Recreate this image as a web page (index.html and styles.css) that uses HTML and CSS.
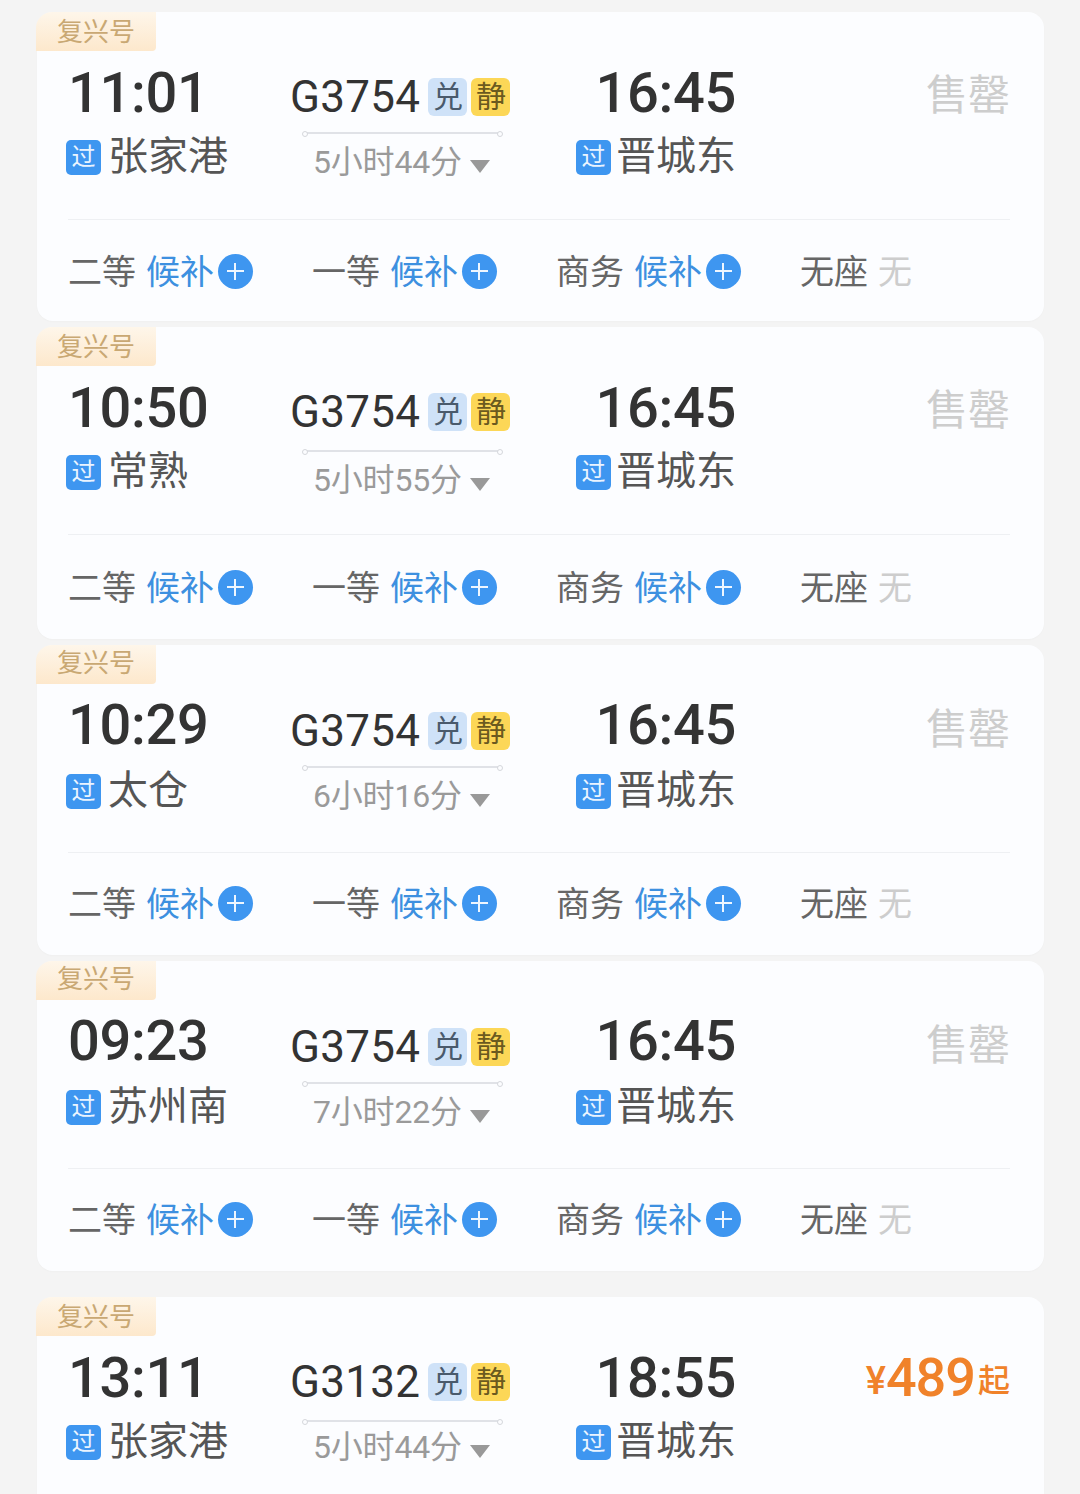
FILE: index.html
```html
<!DOCTYPE html>
<html lang="zh-CN">
<head>
<meta charset="utf-8">
<title>车次列表</title>
<link rel="stylesheet" href="styles.css">
</head>
<body>
<main class="list">

<article class="card">
  <div class="tag">复兴号</div>
  <div class="main">
    <div class="dep"><div class="time">11:01</div><div class="station"><span class="pass">过</span>张家港</div></div>
    <div class="train">
      <div class="no"><span>G3754</span><span class="chip chip-blue">兑</span><span class="chip chip-yellow">静</span></div>
      <div class="bar"></div>
      <div class="dur">5小时44分<i class="tri"></i></div>
    </div>
    <div class="arr"><div class="time">16:45</div><div class="station"><span class="pass">过</span>晋城东</div></div>
    <div class="status">售罄</div>
  </div>
  <div class="seats">
    <div class="seat">二等<span class="wait">候补</span><i class="plus"></i></div>
    <div class="seat">一等<span class="wait">候补</span><i class="plus"></i></div>
    <div class="seat">商务<span class="wait">候补</span><i class="plus"></i></div>
    <div class="seat">无座<span class="none">无</span></div>
  </div>
</article>

<article class="card card-b">
  <div class="tag">复兴号</div>
  <div class="main">
    <div class="dep"><div class="time">10:50</div><div class="station"><span class="pass">过</span>常熟</div></div>
    <div class="train">
      <div class="no"><span>G3754</span><span class="chip chip-blue">兑</span><span class="chip chip-yellow">静</span></div>
      <div class="bar"></div>
      <div class="dur">5小时55分<i class="tri"></i></div>
    </div>
    <div class="arr"><div class="time">16:45</div><div class="station"><span class="pass">过</span>晋城东</div></div>
    <div class="status">售罄</div>
  </div>
  <div class="seats">
    <div class="seat">二等<span class="wait">候补</span><i class="plus"></i></div>
    <div class="seat">一等<span class="wait">候补</span><i class="plus"></i></div>
    <div class="seat">商务<span class="wait">候补</span><i class="plus"></i></div>
    <div class="seat">无座<span class="none">无</span></div>
  </div>
</article>

<article class="card card-c">
  <div class="tag">复兴号</div>
  <div class="main">
    <div class="dep"><div class="time">10:29</div><div class="station"><span class="pass">过</span>太仓</div></div>
    <div class="train">
      <div class="no"><span>G3754</span><span class="chip chip-blue">兑</span><span class="chip chip-yellow">静</span></div>
      <div class="bar"></div>
      <div class="dur">6小时16分<i class="tri"></i></div>
    </div>
    <div class="arr"><div class="time">16:45</div><div class="station"><span class="pass">过</span>晋城东</div></div>
    <div class="status">售罄</div>
  </div>
  <div class="seats">
    <div class="seat">二等<span class="wait">候补</span><i class="plus"></i></div>
    <div class="seat">一等<span class="wait">候补</span><i class="plus"></i></div>
    <div class="seat">商务<span class="wait">候补</span><i class="plus"></i></div>
    <div class="seat">无座<span class="none">无</span></div>
  </div>
</article>

<article class="card card-c">
  <div class="tag">复兴号</div>
  <div class="main">
    <div class="dep"><div class="time">09:23</div><div class="station"><span class="pass">过</span>苏州南</div></div>
    <div class="train">
      <div class="no"><span>G3754</span><span class="chip chip-blue">兑</span><span class="chip chip-yellow">静</span></div>
      <div class="bar"></div>
      <div class="dur">7小时22分<i class="tri"></i></div>
    </div>
    <div class="arr"><div class="time">16:45</div><div class="station"><span class="pass">过</span>晋城东</div></div>
    <div class="status">售罄</div>
  </div>
  <div class="seats">
    <div class="seat">二等<span class="wait">候补</span><i class="plus"></i></div>
    <div class="seat">一等<span class="wait">候补</span><i class="plus"></i></div>
    <div class="seat">商务<span class="wait">候补</span><i class="plus"></i></div>
    <div class="seat">无座<span class="none">无</span></div>
  </div>
</article>

<article class="card card-last">
  <div class="tag">复兴号</div>
  <div class="main">
    <div class="dep"><div class="time">13:11</div><div class="station"><span class="pass">过</span>张家港</div></div>
    <div class="train">
      <div class="no"><span>G3132</span><span class="chip chip-blue">兑</span><span class="chip chip-yellow">静</span></div>
      <div class="bar"></div>
      <div class="dur">5小时44分<i class="tri"></i></div>
    </div>
    <div class="arr"><div class="time">18:55</div><div class="station"><span class="pass">过</span>晋城东</div></div>
    <div class="price"><span class="yen">¥</span><span class="amount">489</span><span class="from">起</span></div>
  </div>
</article>

</main>
</body>
</html>
```
FILE: styles.css
```css
html, body {
  margin: 0;
  height: 1494px;
  overflow: hidden;
  background: #f4f4f4;
}
body {
  font-family: "Roboto", "Noto Sans CJK SC", sans-serif;
  color: #333;
}
.list {
  display: flex;
  flex-direction: column;
  gap: 6px;
  padding: 12px 36px 0 37px;
}
.card {
  background: #fcfdff;
  border-radius: 16px;
  height: 309px;
  flex: none;
  box-shadow: 0 1px 2px rgba(0, 0, 0, .02);
}
.card-b { height: 312px; }
.card-c { height: 310px; }
.card-last { margin-top: 20px; height: 260px; }
.tag {
  width: 120px;
  height: 39px;
  margin-left: -1px;
  box-sizing: border-box;
  padding-left: 21px;
  font-size: 26px;
  line-height: 40px;
  color: #c9a873;
  background: linear-gradient(180deg, #fef6ea, #fde8cc);
  border-radius: 16px 0 4px 0;
}
.card-c .tag { line-height: 36px; }
.main {
  display: grid;
  grid-template-columns: 224px 286px 160px 1fr;
  height: 168px;
  padding: 7px 34px 0 29px;
  box-sizing: border-box;
}
.card-c .main { padding-top: 6px; }
.time {
  font-size: 56px;
  line-height: 70px;
  font-weight: 500;
  color: #333;
  letter-spacing: -.3px;
}
.dep .time { padding-left: 2px; }
.station {
  display: flex;
  align-items: center;
  gap: 7px;
  height: 56px;
  margin-top: 1px;
  font-size: 40px;
  line-height: 56px;
  color: #555;
  white-space: nowrap;
}
.card-c .station { margin-top: 3px; }
.pass {
  width: 35px;
  height: 35px;
  flex: none;
  border-radius: 5px;
  background: #3e96f0;
  color: #eaf4ff;
  font-size: 24px;
  line-height: 35px;
  text-align: center;
}
.arr { display: flex; flex-direction: column; align-items: flex-end; }
.arr .station { gap: 5px; }
.train { padding-top: 16px; }
.card-c .train { padding-top: 18px; }
.no {
  display: flex;
  align-items: center;
  height: 46px;
  font-size: 44px;
  font-weight: 400;
  letter-spacing: .3px;
  color: #333;
}
.chip {
  width: 39px;
  height: 38px;
  border-radius: 6px;
  margin-left: 8px;
  font-size: 30px;
  line-height: 38px;
  letter-spacing: 0;
  text-align: center;
}
.chip + .chip { margin-left: 4px; }
.chip-blue { background: #cfe2f8; color: #4a5a6c; }
.chip-yellow { background: #fcd757; color: #6b5a20; }
.bar {
  position: relative;
  width: 193px;
  height: 2px;
  margin: 12px 0 0 16px;
  background: #e0e2e7;
}
.card-b .bar,
.card-last .bar { margin-top: 15px; }
.bar::before,
.bar::after {
  content: "";
  position: absolute;
  top: -1px;
  width: 4px;
  height: 4px;
  border: 1px solid #d5d7dc;
  background: #fcfdff;
  border-radius: 50%;
}
.bar::before { left: -4px; }
.bar::after { right: -4px; }
.dur {
  display: flex;
  align-items: center;
  height: 40px;
  margin-top: 5px;
  padding-left: 23px;
  font-size: 32px;
  letter-spacing: -.2px;
  color: #9a9a9a;
}
.card-last .dur { margin-top: 2px; }
.tri {
  width: 0;
  height: 0;
  margin: 14px 0 0 8px;
  border-left: 10px solid transparent;
  border-right: 10px solid transparent;
  border-top: 13px solid #999;
}
.status {
  justify-self: end;
  font-size: 42px;
  line-height: 76px;
  color: #cdcdcd;
}
.card-c .status { line-height: 80px; }
.price {
  justify-self: end;
  align-self: start;
  display: flex;
  align-items: center;
  height: 70px;
  line-height: 70px;
  color: #f0822a;
  font-weight: 500;
}
.yen { font-size: 38px; margin-top: 6px; }
.amount { font-size: 54px; letter-spacing: -1px; }
.from { font-size: 32px; margin: 6px 0 0 3px; }
.seats {
  display: grid;
  grid-template-columns: repeat(4, 244px);
  margin: 0 34px 0 31px;
  height: 102px;
  box-sizing: border-box;
  padding-bottom: 2px;
  align-items: center;
  border-top: 1px solid #eef0f3;
}
.card-b .seats { padding-bottom: 0; }
.card-c .seats { padding-bottom: 4px; }
.seat {
  display: flex;
  align-items: center;
  font-size: 34px;
  color: #666;
}
.wait { margin-left: 10px; color: #3d90e0; }
.none { margin-left: 10px; color: #cdcdcd; }
.plus {
  position: relative;
  width: 35px;
  height: 35px;
  margin: 4px 0 0 4px;
  flex: none;
  border-radius: 50%;
  background: #3e96f0;
}
.plus::before,
.plus::after {
  content: "";
  position: absolute;
  background: #eef6ff;
}
.plus::before { left: 9px; right: 9px; top: 16px; height: 2px; }
.plus::after { top: 9px; bottom: 9px; left: 16px; width: 2px; }
```
